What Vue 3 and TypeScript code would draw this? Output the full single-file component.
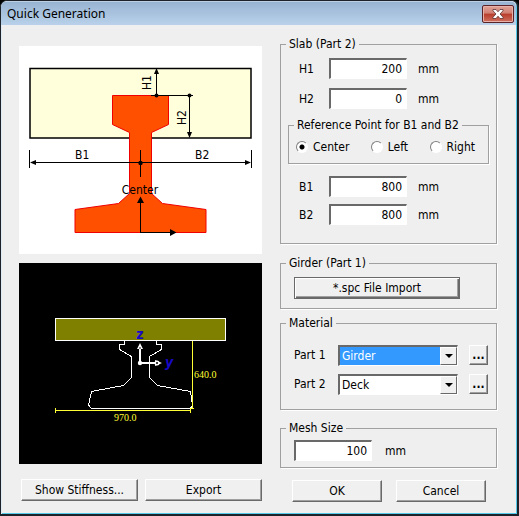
<script setup lang="ts">
import { ref } from 'vue'

type Reference = 'Center' | 'Left' | 'Right'

const h1 = ref('200')
const h2 = ref('0')
const b1 = ref('800')
const b2 = ref('800')
const meshSize = ref('100')
const references: Reference[] = ['Center', 'Left', 'Right']
const reference = ref<Reference>('Center')
const materials = ['Girder', 'Deck']
const part1 = ref('Girder')
const part2 = ref('Deck')
</script>

<template>
  <main class="dialog">
    <header class="titlebar">
      <h1 class="title">Quick Generation</h1>
      <button class="close" type="button" aria-label="Close">
        <svg width="12" height="10" viewBox="0 0 12 10" aria-hidden="true">
          <path d="M1 .5H4L6 2.8L8 .5H11V1.8L8 5L11 8.2V9.5H8L6 7.2L4 9.5H1V8.2L4 5L1 1.8Z" fill="#fff" stroke="#5d3434" stroke-width=".8" />
        </svg>
      </button>
    </header>

    <form class="body" @submit.prevent>
      <section class="column">
        <svg class="figure" viewBox="0 0 243 208" role="img" aria-label="Slab and girder dimensions">
          <rect width="243" height="208" fill="#fff" />
          <rect x="11" y="22.5" width="221" height="69.5" fill="#ffffdc" stroke="#000" stroke-width="1.5" />
          <path d="M93.5 49.5H149.5V78.5L132.5 86.5V147.5L143.5 157.5L187 163.5V186.5H56V163.5L99.5 157.5L110.5 147.5V86.5L93.5 78.5Z" fill="#ff5000" stroke="#f00000" />
          <g stroke="#000" fill="none" shape-rendering="crispEdges">
            <path d="M137.5 24V49.5M132 49.5H174M170.5 49.5V91M10.5 104V122M232.5 104V122M12 116.5H231M121.5 104V131M121.5 156V186.5H152" />
          </g>
          <g fill="#000">
            <path d="M137.5 22L140 28H135ZM170.5 92L168 86H173ZM11 116.5L17 114V119ZM232 116.5L226 114V119ZM121.5 150.5L125 157H118ZM157.5 186.5L151 190V183Z" />
            <circle cx="137.5" cy="49.5" r="2" />
            <circle cx="170.5" cy="49.5" r="2" />
            <circle cx="121.5" cy="117" r="2.2" />
          </g>
          <g class="caption">
            <text transform="translate(132 44) rotate(-90)">H1</text>
            <text transform="translate(167 79) rotate(-90)">H2</text>
            <text x="56" y="113">B1</text>
            <text x="176" y="113">B2</text>
            <text x="121" y="148" text-anchor="middle">Center</text>
          </g>
        </svg>

        <svg class="figure" viewBox="0 0 243 201" role="img" aria-label="Generated section">
          <rect width="243" height="201" fill="#000" />
          <g shape-rendering="crispEdges">
            <rect x="36.5" y="55.5" width="170" height="22" fill="#808000" stroke="#fff" />
            <path d="M105.5 78V81.5H100.5V86.5L112.5 93.5V114.5L104.5 122.5L72.5 128.5L69.5 142L72.5 145.5H171.5L173.5 142L171.5 128.5L138.5 122.5L130.5 114.5V93.5L142.5 86.5V81.5H137.5V78" fill="none" stroke="#fff" />
            <path d="M173.5 78V145.5M171 145.5H175M36.5 147.5H172M36.5 145V150M171.5 145V150" fill="none" stroke="#ff3" />
          </g>
          <path d="M121 99V84M121 100H139" stroke="#fff" stroke-width="2" />
          <path d="M121 80L124 86H118ZM143 100L136 103V97Z" fill="#fff" />
          <circle cx="121" cy="100" r="2.2" fill="#fff" />
          <circle cx="138" cy="100" r="2.5" fill="#fff" />
          <circle cx="138" cy="100" r="1" fill="#000" />
          <circle cx="121" cy="85" r=".8" fill="#000" />
          <g fill="none" class="axis">
            <text x="121" y="76" text-anchor="middle">z</text>
            <text x="146" y="104" class="oblique">y</text>
          </g>
          <g class="measure">
            <text x="175" y="115">640.0</text>
            <text x="95" y="158">970.0</text>
          </g>
        </svg>

        <div class="actions actions-left">
          <button class="button" type="button">Show Stiffness...</button>
          <button class="button" type="button">Export</button>
        </div>
      </section>

      <section class="column">
        <fieldset class="group slab">
          <legend>Slab (Part 2)</legend>
          <div class="fields fields-top">
            <label for="h1">H1</label><input id="h1" v-model="h1" class="number" type="text" /><span>mm</span>
            <label for="h2">H2</label><input id="h2" v-model="h2" class="number" type="text" /><span>mm</span>
          </div>
          <fieldset class="group reference">
            <legend>Reference Point for B1 and B2</legend>
            <div class="choices">
              <label v-for="item in references" :key="item" class="choice">
                <input v-model="reference" type="radio" name="reference" :value="item" />{{ item }}
              </label>
            </div>
          </fieldset>
          <div class="fields fields-bottom">
            <label for="b1">B1</label><input id="b1" v-model="b1" class="number" type="text" /><span>mm</span>
            <label for="b2">B2</label><input id="b2" v-model="b2" class="number" type="text" /><span>mm</span>
          </div>
        </fieldset>

        <fieldset class="group girder">
          <legend>Girder (Part 1)</legend>
          <div class="inset">
            <button class="button default" type="button">*.spc File Import</button>
          </div>
        </fieldset>

        <fieldset class="group material">
          <legend>Material</legend>
          <div class="inset parts">
            <label for="part1">Part 1</label>
            <div class="combo active">
              <select id="part1" v-model="part1">
                <option v-for="m in materials" :key="m">{{ m }}</option>
              </select>
              <span class="arrow" aria-hidden="true"></span>
            </div>
            <button class="button more" type="button" aria-label="Edit part 1 material">...</button>
            <label for="part2">Part 2</label>
            <div class="combo">
              <select id="part2" v-model="part2">
                <option v-for="m in materials" :key="m">{{ m }}</option>
              </select>
              <span class="arrow" aria-hidden="true"></span>
            </div>
            <button class="button more" type="button" aria-label="Edit part 2 material">...</button>
          </div>
        </fieldset>

        <fieldset class="group mesh">
          <legend>Mesh Size</legend>
          <div class="inset size">
            <input v-model="meshSize" class="number" type="text" aria-label="Mesh size" /><span>mm</span>
          </div>
        </fieldset>

        <div class="actions actions-right">
          <button class="button" type="submit">OK</button>
          <button class="button" type="button">Cancel</button>
        </div>
      </section>
    </form>
  </main>
</template>

<style>
body {
  background: #000;
}
</style>

<style scoped>
.dialog,
.dialog * {
  box-sizing: border-box;
}

.dialog {
  min-height: 100vh;
  border: 1px solid #1c2228;
  border-right-width: 2px;
  border-bottom-width: 2px;
  border-radius: 7px 7px 0 0;
  background: #efefef;
  box-shadow: inset 1px 1px #dfeaf5, inset -1px -1px #55c8e8;
  color: #000;
  font: 12px/16px "DejaVu Sans Condensed", "DejaVu Sans", sans-serif;
}

.titlebar {
  display: flex;
  align-items: flex-start;
  justify-content: space-between;
  height: 24px;
  margin-right: 1px;
  padding: 4px 2px 0 6px;
  border-radius: 6px 6px 0 0;
  background: linear-gradient(#dfeaf5 0, #98b4d3 1px, #b9d1ea 100%);
}

.title {
  margin: 0;
  font: 12px/18px "Noto Sans", "Open Sans", sans-serif;
}

.close {
  display: flex;
  align-items: center;
  justify-content: center;
  width: 32px;
  height: 18px;
  padding: 0;
  border: 1px solid #5a2327;
  border-radius: 2px;
  background: linear-gradient(#e0a398 0, #d17f72 45%, #b83c2b 50%, #d07060 100%);
  box-shadow: inset 0 0 0 1px #e5b1a8;
}

.body {
  display: grid;
  grid-template-columns: 243fr 217fr;
  gap: 18px;
  padding: 11px 20px 12px 18px;
}

.column {
  display: flex;
  flex-direction: column;
  min-width: 0;
}

.figure {
  display: block;
  width: 100%;
  margin-top: 9px;
}

.figure:first-child {
  margin-top: 10px;
}

.caption {
  font: 12px "DejaVu Sans Condensed", "DejaVu Sans", sans-serif;
}

.axis {
  fill: #1808c8;
  font: bold 14px "DejaVu Sans Condensed", "DejaVu Sans", sans-serif;
}

.oblique {
  font-style: italic;
}

.measure {
  fill: #ff3;
  font: 10px "Liberation Serif", serif;
}

.group {
  min-width: 0;
  margin: 0;
  border: 1px solid #a0a0a0;
  box-shadow: 1px 1px #fff;
}

.group > legend {
  height: 16px;
  padding: 0 3px;
  white-space: nowrap;
}

.inset {
  padding-left: 8px;
}

.slab {
  padding: 6px 7px 18px 5px;
}

.fields {
  display: grid;
  grid-template-columns: 30px 78px 1fr;
  align-items: center;
  padding-left: 13px;
}

.fields span {
  padding-left: 11px;
}

.fields-top {
  row-gap: 9px;
  margin-bottom: 8px;
}

.fields-bottom {
  row-gap: 7px;
  margin-top: 12px;
}

.number {
  width: 78px;
  height: 21px;
  padding: 0 4px 0 2px;
  border: 1px solid #fff;
  border-top: 2px solid #696969;
  border-left: 2px solid #696969;
  border-radius: 0;
  background: #fff;
  color: #000;
  font: inherit;
  text-align: right;
  outline: none;
}

.reference {
  margin-left: 2px;
  padding: 6px 13px 8px 5px;
}

.choices {
  display: flex;
  justify-content: space-between;
  padding-left: 2px;
}

.choice {
  display: flex;
  align-items: center;
  gap: 5px;
}

.choice input {
  appearance: none;
  width: 12px;
  height: 12px;
  margin: 0;
  border: 1px solid;
  border-color: #808080 #fff #fff #808080;
  border-radius: 50%;
  background: #fff;
}

.choice input:checked {
  background: radial-gradient(circle, #000 2px, #fff 3px);
}

.button {
  height: 22px;
  padding: 0;
  border: 1px solid;
  border-color: #fff #696969 #696969 #fff;
  border-radius: 0;
  background: #f0f0f0;
  box-shadow: inset -1px -1px #a0a0a0;
  color: #000;
  font: inherit;
}

.girder {
  margin-top: 11px;
  padding: 6px 36px 9px 5px;
}

.default {
  display: block;
  width: 100%;
  border-color: #696969;
  box-shadow: inset 1px 1px #fff, inset -1px -1px #696969, inset -2px -2px #a0a0a0;
}

.material {
  margin-top: 6px;
  padding: 14px 8px 14px 5px;
}

.parts {
  display: grid;
  grid-template-columns: 44px 1fr 19px;
  row-gap: 8px;
}

.parts label {
  line-height: 20px;
}

.combo {
  display: flex;
  height: 21px;
  margin-right: 11px;
  border: 1px solid #fff;
  border-top: 2px solid #696969;
  border-left: 2px solid #696969;
  background: #fff;
}

.combo select {
  flex: 1;
  min-width: 0;
  appearance: none;
  padding: 0 2px;
  border: 0;
  border-radius: 0;
  background: #fff;
  color: #000;
  font: inherit;
  outline: none;
}

.combo.active select {
  background: #3399ff;
  color: #fff;
}

.arrow {
  display: grid;
  place-items: center;
  width: 17px;
  border: 1px solid;
  border-color: #fff #696969 #696969 #fff;
  background: #f0f0f0;
  pointer-events: none;
}

.arrow::before {
  content: "";
  border: 4px solid transparent;
  border-top-color: #000;
  border-bottom: 0;
}

.more {
  width: 19px;
  height: 20px;
  font-weight: bold;
}

.mesh {
  margin-top: 10px;
  padding: 4px 5px 6px;
}

.size {
  display: flex;
  align-items: center;
  gap: 13px;
}

.actions {
  display: flex;
}

.actions-left {
  gap: 7px;
  margin-top: 15px;
  padding-left: 2px;
}

.actions-left .button {
  flex: 1;
}

.actions-right {
  gap: 14px;
  margin-top: 12px;
  padding: 0 11px 0 12px;
}

.actions-right .button {
  flex: 1;
}
</style>
